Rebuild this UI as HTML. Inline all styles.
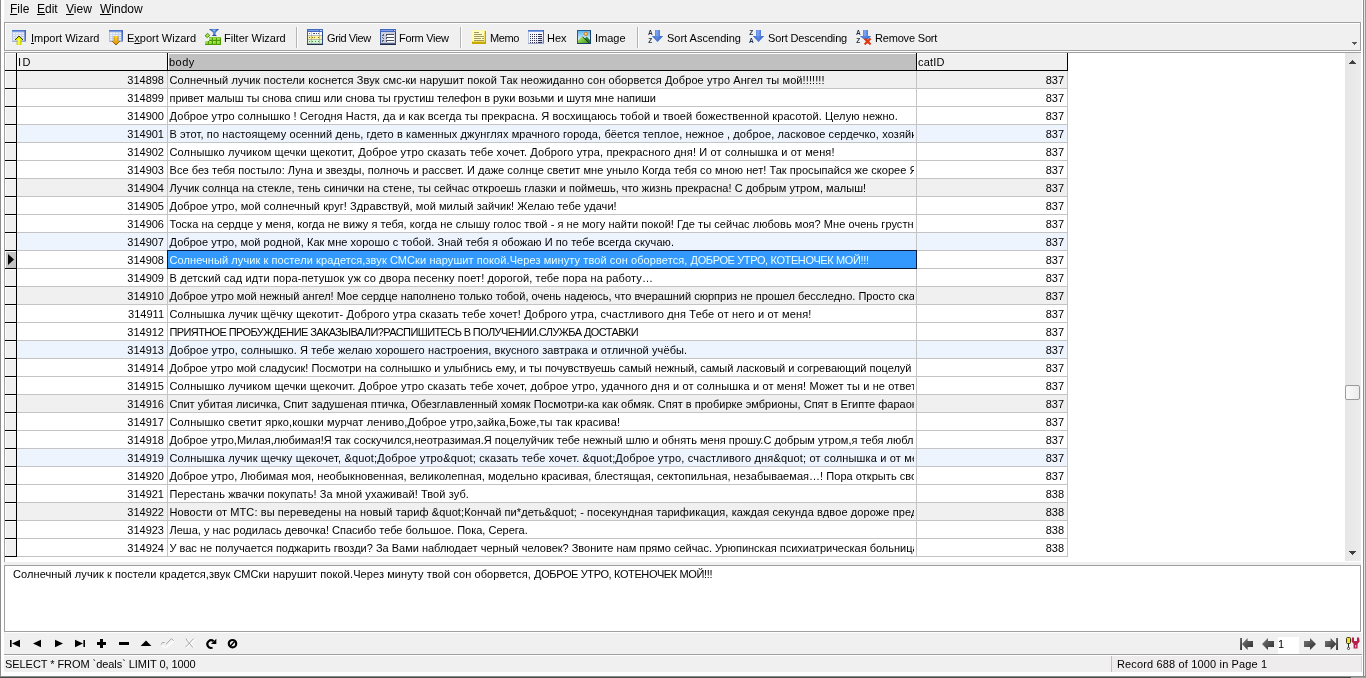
<!DOCTYPE html>
<html lang="ru"><head><meta charset="utf-8"><title>deals</title>
<style>
html,body{margin:0;padding:0}
body{width:1366px;height:678px;overflow:hidden;background:#f0f0f0;position:relative;font:11px "Liberation Sans","DejaVu Sans",sans-serif;color:#000}
*{box-sizing:border-box}
div,span,i{position:absolute;white-space:nowrap}
#menu,#tb,#grid,#memo,#nav,#st{will-change:transform}
i{display:block;font-style:normal}
u{text-decoration:underline}
b{font-weight:normal}
/* window frame */
#fl{left:0;top:0;width:1px;height:678px;background:#8c8c8c}
#fl2{left:1px;top:0;width:3px;height:676px;background:#fff}
#fr1{left:1362px;top:0;width:1px;height:676px;background:#fff}
#fr0{left:1361px;top:22px;width:1px;height:610px;background:#fff}
#fr2{left:1363px;top:0;width:1px;height:678px;background:#8c8c8c}
#fr3{left:1364px;top:0;width:1px;height:678px;background:#e4e4e4}
#fr4{left:1365px;top:0;width:1px;height:678px;background:#9a9a9a}
#fb1{left:1px;top:672px;width:1362px;height:4px;background:#fff}
#fb2{left:0;top:676px;width:1366px;height:1px;background:#8c8c8c}
#fb3{left:0;top:677px;width:1351px;height:1px;background:#484848}
#fb4{left:1351px;top:677px;width:15px;height:1px;background:#a0a0a0}
/* menu */
#menu{left:0;top:0;width:1366px;height:22px}
#menu span{top:2px;font-size:12px;line-height:14px}
/* toolbar */
#tb{left:4px;top:22px;width:1357px;height:29px;border:1px solid #a0a0a0;box-shadow:inset 1px 1px 0 #fff,1px 1px 0 #fff}
#tb .t{top:9px;line-height:13px}
#tb .sep{top:4px;width:1px;height:21px;background:#b4b4b4;box-shadow:1px 0 0 #fff}
#tb svg{position:absolute}
/* grid */
#grid{left:4px;top:52px;width:1357px;height:510px;background:#fff;border-left:1px solid #a0a0a0;border-top:1px solid #a0a0a0;overflow:hidden}
.hd{top:0;height:18px;background:#f0f0f0;border-bottom:1px solid #000;border-right:1px solid #000;box-shadow:inset 1px 1px 0 #fff;padding:3px 0 0 2px;line-height:13px}
#hind{left:0;width:12px}
#hid{left:12px;width:151px;padding-left:1px;letter-spacing:1.5px}
#hbody{left:163px;width:749px;background:#c0c0c0;padding-left:1px;letter-spacing:.5px}
#hcat{left:912px;width:151px;padding-left:1px;letter-spacing:.2px}
.r{left:0;width:1063px;height:18px;border-bottom:1px solid #c4c4c4;line-height:13px}
.r.g{background:#f0f0f0}
.r.b{background:#eef4fd}
.ind{left:0;top:0;width:12px;height:18px;background:#f0f0f0;border-right:1px solid #000;border-bottom:1px solid #000;box-shadow:inset 1px 1px 0 #fff}
.ind.cur{background:#c4c4c4}
.ind svg{position:absolute;left:3px;top:3px}
.c1{left:12px;top:0;width:151px;height:17px;border-right:1px solid #c4c4c4;text-align:right;padding:3px 3px 0 0}
.c2{left:163px;top:0;width:746px;height:17px;padding:3px 0 0 1.5px;overflow:hidden}
.c3{left:911px;top:0;width:152px;height:17px;border-left:1px solid #c4c4c4;border-right:1px solid #c4c4c4;text-align:right;padding:3px 3px 0 0}
.selc{background:#3399ff;color:#e8ffff;box-shadow:0 0 0 1px #0a1a3a;left:163px;top:0;width:748px;height:17px;padding:3px 0 0 1.5px;overflow:visible;z-index:2}
#sb{left:1340px;top:0;width:16px;height:508px;background:linear-gradient(90deg,#e6e6e6,#ececec)}
#sb .up{left:4px;top:7px;width:0;height:0;border-left:3.5px solid transparent;border-right:3.5px solid transparent;border-bottom:4px solid #404040}
#sb .dn{left:4px;top:498px;width:0;height:0;border-left:3.5px solid transparent;border-right:3.5px solid transparent;border-top:4px solid #404040}
#sb .thumb{left:0;top:332px;width:15px;height:15px;background:linear-gradient(90deg,#fafafa,#ececec);border:1px solid #9a9a9a;border-radius:2px}
/* memo */
#memo{left:4px;top:565px;width:1357px;height:67px;background:#fff;border:1px solid #a0a0a0;box-shadow:1px 1px 0 #fff}
#memo span{left:8px;top:2px;line-height:13px;letter-spacing:.085px}
/* nav */
#nav{left:4px;top:632px;width:1357px;height:22px}
#nav svg{position:absolute}
#pg{left:1274px;top:5px;width:21px;height:17px;background:#fff;padding:1px 0 0 0;line-height:13px}
/* status */
#stl{left:4px;top:654px;width:1358px;height:1px;background:#a0a0a0}
#stl2{left:4px;top:655px;width:1358px;height:1px;background:#fff}
#st{left:4px;top:656px;width:1358px;height:16px;background:#f0f0f0}
#st .rp{left:1108px;top:0;width:250px;height:16px;background:#eeecec;border-right:1px solid #d6d6d6}
#st span{top:2px;line-height:13px}
#st .dv{left:1107px;top:0;width:1px;height:16px;background:#c0c0c0}

</style></head>
<body>
<div id="menu"><span style="left:10px"><u>F</u>ile</span><span style="left:37px"><u>E</u>dit</span><span style="left:66px"><u>V</u>iew</span><span style="left:100px"><u>W</u>indow</span></div>
<svg width="0" height="0" style="left:0;top:0"><defs>
<linearGradient id="gH" x1="0" y1="0" x2="0" y2="1"><stop offset="0" stop-color="#3c63c2"/><stop offset="1" stop-color="#8fb0ec"/></linearGradient>
<linearGradient id="gR" x1="0" y1="0" x2="0" y2="1"><stop offset="0" stop-color="#3a5fbe"/><stop offset="1" stop-color="#5f7fcc"/></linearGradient>
<linearGradient id="gB" x1="0" y1="0" x2="1" y2="1"><stop offset="0" stop-color="#dde4f5"/><stop offset="1" stop-color="#aebce2"/></linearGradient>
<linearGradient id="gA" x1="0" y1="0" x2="1" y2="0"><stop offset="0" stop-color="#2456c4"/><stop offset=".45" stop-color="#7ea6f4"/><stop offset="1" stop-color="#1f4eb8"/></linearGradient>
<linearGradient id="gA2" x1="0" y1="0" x2="0" y2="1"><stop offset="0" stop-color="#4a7ee0"/><stop offset="1" stop-color="#1f4fb4"/></linearGradient>
<linearGradient id="gO" x1="0" y1="0" x2="0" y2="1"><stop offset="0" stop-color="#ffe020"/><stop offset="1" stop-color="#e08800"/></linearGradient>
<linearGradient id="gN" x1="0" y1="0" x2="1" y2="1"><stop offset="0" stop-color="#7a7a7a"/><stop offset="1" stop-color="#2a2a2a"/></linearGradient>
<linearGradient id="gSky" x1="0" y1="0" x2="0" y2="1"><stop offset="0" stop-color="#58b4f0"/><stop offset=".7" stop-color="#d8f0fc"/><stop offset="1" stop-color="#eef8fe"/></linearGradient>
<linearGradient id="gGr" x1="0" y1="0" x2="1" y2="1"><stop offset="0" stop-color="#b8ee64"/><stop offset="1" stop-color="#78c428"/></linearGradient>
<linearGradient id="gHx" x1="0" y1="0" x2="1" y2="1"><stop offset="0" stop-color="#ffffff"/><stop offset=".6" stop-color="#f4f4fc"/><stop offset="1" stop-color="#b8bce8"/></linearGradient>
<linearGradient id="gFu" x1="0" y1="0" x2="1" y2="0"><stop offset="0" stop-color="#15409a"/><stop offset=".5" stop-color="#5c90e4"/><stop offset="1" stop-color="#15409a"/></linearGradient>
<linearGradient id="gMt" x1="0" y1="0" x2="1" y2="1"><stop offset="0" stop-color="#c0f070"/><stop offset="1" stop-color="#3c9a18"/></linearGradient>
</defs></svg>
<div id="tb">
<svg width="14" height="15" style="left:7px;top:7px" viewBox="0 0 14 15"><rect x="0" y="0" width="14" height="12" fill="url(#gB)"/><rect x="0" y="0" width="14" height="2" fill="url(#gH)"/><rect x="12.5" y="0" width="1.5" height="12" fill="url(#gR)"/><rect x="0" y="11" width="14" height="1" fill="#a3abc6"/><rect x="0" y="2" width="1" height="10" fill="#b4c2e4"/>
<g fill="#eef1fa"><rect x="1" y="3" width="2" height="1"/><rect x="4" y="3" width="2" height="1"/><rect x="7" y="3" width="2" height="1"/><rect x="10" y="3" width="2" height="1"/><rect x="1" y="5" width="2" height="1"/><rect x="4" y="5" width="2" height="1"/><rect x="7" y="5" width="2" height="1"/><rect x="10" y="5" width="2" height="1"/><rect x="1" y="7" width="2" height="1"/><rect x="4" y="7" width="2" height="1"/><rect x="7" y="7" width="2" height="1"/><rect x="10" y="7" width="2" height="1"/><rect x="1" y="9" width="2" height="1"/><rect x="4" y="9" width="2" height="1"/><rect x="7" y="9" width="2" height="1"/><rect x="10" y="9" width="2" height="1"/></g><path d="M7 6 L11 10 L9 10 L9 15 L5 15 L5 10 L3 10Z" fill="#e4ee00"/><path d="M6 9 L6 14.6 L7.6 14.6 L7.6 9Z" fill="#f6fb50"/><path d="M3 10 L7 6 L11 10" fill="none" stroke="#3a4200" stroke-width="1"/><path d="M5 10.4 L5 15 M9 10.4 L9 15" stroke="#a8b400" stroke-width=".6"/></svg>
<span class="t" style="left:26px"><u>I</u>mport Wizard</span>
<svg width="14" height="15" style="left:104px;top:7px" viewBox="0 0 14 15"><rect x="0" y="0" width="14" height="12" fill="url(#gB)"/><rect x="0" y="0" width="14" height="2" fill="url(#gH)"/><rect x="12.5" y="0" width="1.5" height="12" fill="url(#gR)"/><rect x="0" y="11" width="14" height="1" fill="#a3abc6"/><rect x="0" y="2" width="1" height="10" fill="#b4c2e4"/>
<g fill="#eef1fa"><rect x="1" y="3" width="2" height="1"/><rect x="4" y="3" width="2" height="1"/><rect x="7" y="3" width="2" height="1"/><rect x="10" y="3" width="2" height="1"/><rect x="1" y="5" width="2" height="1"/><rect x="4" y="5" width="2" height="1"/><rect x="7" y="5" width="2" height="1"/><rect x="10" y="5" width="2" height="1"/><rect x="1" y="7" width="2" height="1"/><rect x="4" y="7" width="2" height="1"/><rect x="7" y="7" width="2" height="1"/><rect x="10" y="7" width="2" height="1"/><rect x="1" y="9" width="2" height="1"/><rect x="4" y="9" width="2" height="1"/><rect x="7" y="9" width="2" height="1"/><rect x="10" y="9" width="2" height="1"/></g><path d="M5 6 L9 6 L9 11 L11 11 L7 15 L3 11 L5 11Z" fill="url(#gO)"/><path d="M3 11 L7 15 L11 11" fill="none" stroke="#7a4400" stroke-width=".8"/><path d="M5 6 L5 11 M9 6 L9 11" stroke="#b87400" stroke-width=".6"/></svg>
<span class="t" style="left:122px">E<u>x</u>port Wizard</span>
<svg width="16" height="16" style="left:200px;top:6px" viewBox="0 0 16 16">
<path d="M4 0 L14 0 L10.6 3.6 L10.6 6.4 L11 7 L7.6 7 L8 6.4 L8 3.6Z" fill="url(#gFu)"/><path d="M6.4 .8 L11.6 .8 L9.3 2.4Z" fill="#dce8ff" opacity=".45"/><rect x="7.4" y="6" width="4" height="1" fill="#1a48a6"/>
<path d="M.6 6 L2.6 4.4 L4.8 6.4 L2.4 8.6 L.6 7.4Z" fill="#a4e048" stroke="#3f8a00" stroke-width=".9"/>
<rect x="4" y="8" width="12" height="4" fill="#4c9c00"/><rect x="0" y="12" width="16" height="4" fill="#4c9c00"/>
<rect x="4" y="8" width="12" height="1" fill="#84c830"/>
<g fill="url(#gGr)"><rect x="4" y="9" width="3" height="2"/><rect x="8" y="9" width="3" height="2"/><rect x="12" y="9" width="3" height="2"/><rect x="0" y="12" width="3" height="3"/><rect x="4" y="12" width="3" height="3"/><rect x="8" y="12" width="3" height="3"/><rect x="12" y="12" width="3" height="3"/></g>
</svg>
<span class="t" style="left:219px">Filter Wizard</span>
<i class="sep" style="left:291px"></i>
<svg width="16" height="16" style="left:302px;top:6px" viewBox="0 0 16 16" shape-rendering="crispEdges">
<rect x="0" y="0" width="16" height="16" fill="#3c5a9c"/><rect x="15" y="3" width="1" height="13" fill="#2a4480"/><rect x="0" y="0" width="16" height="3" fill="#4068c0"/><rect x="1" y="1" width="11" height="1" fill="#7ea0e4"/><rect x="13" y="1" width="2" height="1" fill="#c8d8f8"/><rect x="0" y="15" width="16" height="1" fill="#1e3050"/>
<rect x="1" y="3" width="14" height="4" fill="#ffffff"/><rect x="1" y="7" width="14" height="4" fill="#fdf3a4"/><rect x="1" y="11" width="14" height="4" fill="#d4f6d0"/>
<g fill="#9aa4a8"><rect x="1" y="6" width="14" height="1" opacity=".7"/><rect x="1" y="10" width="14" height="1" opacity=".7"/><rect x="1" y="14" width="14" height="1" opacity=".8"/><rect x="4" y="3" width="1" height="12" opacity=".6"/><rect x="12" y="3" width="1" height="12" opacity=".6"/></g>
<g fill="#555a66"><rect x="2" y="4" width="1" height="1"/><rect x="6" y="4" width="2" height="1"/><rect x="9" y="4" width="1" height="1"/><rect x="11" y="4" width="1" height="1"/></g>
<g fill="#8a7a10"><rect x="2" y="8" width="1" height="1"/><rect x="5" y="8" width="1" height="1"/><rect x="7" y="8" width="1" height="1"/><rect x="11" y="8" width="1" height="1"/></g>
<g fill="#4c8a58"><rect x="2" y="12" width="1" height="1"/><rect x="5" y="12" width="1" height="1"/><rect x="8" y="12" width="1" height="1"/><rect x="11" y="12" width="1" height="1"/></g>
</svg>
<span class="t" style="left:322px;letter-spacing:-.4px">Grid View</span>
<svg width="16" height="16" style="left:375px;top:6px" viewBox="0 0 16 16" shape-rendering="crispEdges">
<rect x="0" y="0" width="16" height="16" fill="#42609e"/><rect x="15" y="3" width="1" height="13" fill="#2a4480"/><rect x="0" y="0" width="16" height="3" fill="#4068c0"/><rect x="1" y="1" width="12" height="1" fill="#7ea0e4"/><rect x="14" y="1" width="1" height="1" fill="#d8e4fc"/><rect x="0" y="15" width="16" height="1" fill="#1e2c48"/><rect x="0" y="14" width="16" height="1" fill="#5a648c"/>
<rect x="1" y="3" width="14" height="11" fill="#ccd0de"/>
<g fill="#4a4e58"><rect x="6" y="5" width="8" height="1"/><rect x="6" y="8" width="8" height="1"/><rect x="6" y="11" width="8" height="1"/><rect x="6" y="5" width="1" height="2"/><rect x="6" y="8" width="1" height="2"/><rect x="6" y="11" width="1" height="2"/></g>
<g fill="#ffffff"><rect x="7" y="6" width="7" height="2"/><rect x="7" y="9" width="7" height="2"/><rect x="7" y="12" width="7" height="1"/></g>
<g fill="#5a5e70"><rect x="3" y="5" width="1" height="1"/><rect x="2" y="6" width="2" height="1"/><rect x="2" y="8" width="1" height="1"/><rect x="3" y="9" width="1" height="1"/><rect x="2" y="11" width="2" height="1"/><rect x="2" y="12" width="1" height="1"/></g>
</svg>
<span class="t" style="left:394px;letter-spacing:-.3px">Form View</span>
<i class="sep" style="left:455px"></i>
<svg width="14" height="14" style="left:467px;top:7px" viewBox="0 0 14 14" shape-rendering="crispEdges">
<rect x="0" y="0" width="14" height="14" fill="#fffba6"/><rect x="1" y="1" width="11" height="10" fill="#fffdc8"/><rect x="13" y="1" width="1" height="13" fill="#c4a400"/><rect x="12" y="1" width="1" height="11" fill="#f2e060"/><rect x="0" y="12" width="14" height="2" fill="#c8a800"/><rect x="0" y="11" width="13" height="1" fill="#f0dc50"/>
<g fill="#a09a62"><rect x="2" y="2" width="5" height="1"/><rect x="2" y="4" width="8" height="1"/><rect x="2" y="6" width="10" height="1"/><rect x="2" y="8" width="7" height="1"/><rect x="10" y="8" width="2" height="1"/><rect x="2" y="10" width="10" height="1"/></g>
</svg>
<span class="t" style="left:485px;letter-spacing:-.4px">Memo</span>
<svg width="16" height="14" style="left:523px;top:7px" viewBox="0 0 16 14" shape-rendering="crispEdges">
<rect x="0" y="0" width="16" height="14" fill="url(#gHx)"/><rect x="0" y="0" width="16" height="2" fill="url(#gH)"/><rect x="14.5" y="0" width="1.5" height="14" fill="url(#gR)"/><rect x="0" y="2" width="1" height="12" fill="#b8c4e4"/><rect x="0" y="13" width="16" height="1" fill="#9ca6cc"/>
<g fill="#2e3048"><rect x="2" y="4" width="1" height="1"/><rect x="4" y="4" width="1" height="1"/><rect x="6" y="4" width="1" height="1"/><rect x="8" y="4" width="1" height="1"/><rect x="10" y="4" width="4" height="1"/>
<rect x="2" y="6" width="1" height="1"/><rect x="4" y="6" width="1" height="1"/><rect x="6" y="6" width="1" height="1"/><rect x="8" y="6" width="1" height="1"/><rect x="10" y="6" width="4" height="1"/>
<rect x="2" y="8" width="1" height="1"/><rect x="4" y="8" width="1" height="1"/><rect x="6" y="8" width="1" height="1"/><rect x="8" y="8" width="1" height="1"/><rect x="10" y="8" width="4" height="1"/>
<rect x="2" y="10" width="1" height="1"/><rect x="4" y="10" width="1" height="1"/><rect x="6" y="10" width="1" height="1"/><rect x="8" y="10" width="1" height="1"/><rect x="10" y="10" width="4" height="1"/>
<rect x="2" y="12" width="1" height="1"/><rect x="4" y="12" width="1" height="1"/><rect x="6" y="12" width="1" height="1"/><rect x="8" y="12" width="1" height="1"/><rect x="10" y="12" width="4" height="1"/></g>
</svg>
<span class="t" style="left:542px">Hex</span>
<svg width="14" height="14" style="left:572px;top:7px" viewBox="0 0 14 14">
<rect x="0" y="0" width="14" height="14" fill="#245a8c"/><rect x="13" y="0" width="1" height="14" fill="#17406c"/><rect x="0" y="13" width="14" height="1" fill="#17406c"/><rect x="1" y="1" width="12" height="12" fill="url(#gSky)"/>
<circle cx="8.9" cy="3.9" r="1.8" fill="#f4b050" stroke="#c8761c" stroke-width=".7"/><circle cx="8.7" cy="3.6" r=".7" fill="#ffe8b8"/>
<path d="M7.6 8.6 L9.8 6.8 L13 10 L13 13 L10 13Z" fill="#2a7a30"/>
<path d="M1 10.6 L5 6.4 L11.8 13 L1 13Z" fill="url(#gMt)"/>
<path d="M5.6 6.9 L12.2 13" stroke="#0c2c10" stroke-width=".9" fill="none"/>
</svg>
<span class="t" style="left:590px">Image</span>
<i class="sep" style="left:632px"></i>
<svg width="16" height="14" style="left:643px;top:7px" viewBox="0 0 16 14">
<text x="0" y="5" font-family="Liberation Sans,sans-serif" font-size="6.5" font-weight="bold" fill="#1c3048">A</text><text x=".2" y="13" font-family="Liberation Sans,sans-serif" font-size="6.5" font-weight="bold" fill="#1c3048">Z</text>
<path d="M7 0 L12 0 L12 6 L15 6 L9.5 12 L4 6 L7 6Z" fill="url(#gA)"/><path d="M4 6 L15 6 L9.5 12Z" fill="url(#gA2)" opacity=".55"/>
</svg>
<span class="t" style="left:662px">Sort Ascending</span>
<svg width="16" height="14" style="left:744px;top:7px" viewBox="0 0 16 14">
<text x=".2" y="5" font-family="Liberation Sans,sans-serif" font-size="6.5" font-weight="bold" fill="#1c3048">Z</text><text x="0" y="13" font-family="Liberation Sans,sans-serif" font-size="6.5" font-weight="bold" fill="#1c3048">A</text>
<path d="M7 0 L12 0 L12 6 L15 6 L9.5 12 L4 6 L7 6Z" fill="url(#gA)"/><path d="M4 6 L15 6 L9.5 12Z" fill="url(#gA2)" opacity=".55"/>
</svg>
<span class="t" style="left:763px;letter-spacing:-.15px">Sort Descending</span>
<svg width="16" height="15" style="left:851px;top:7px" viewBox="0 0 16 15">
<text x="0" y="5" font-family="Liberation Sans,sans-serif" font-size="6.5" font-weight="bold" fill="#1c3048">A</text><text x=".2" y="13" font-family="Liberation Sans,sans-serif" font-size="6.5" font-weight="bold" fill="#1c3048">Z</text>
<path d="M7 0 L12 0 L12 6 L15 6 L10 11 L4 6 L7 6Z" fill="url(#gA)"/><path d="M4 6 L15 6 L10 11Z" fill="url(#gA2)" opacity=".55"/>
<path d="M8.6 8.6 L14.6 14.4 M14.6 8.6 L8.6 14.4" stroke="#e0340c" stroke-width="2.1"/><circle cx="11.6" cy="11.5" r="1.8" fill="#e23810"/>
</svg>
<span class="t" style="left:870px;letter-spacing:-.18px">Remove Sort</span>
<svg width="5" height="3" style="left:1347px;top:19px" viewBox="0 0 5 3" shape-rendering="crispEdges"><rect x="0" y="0" width="5" height="1" fill="#585858"/><rect x="1" y="1" width="3" height="1" fill="#585858"/><rect x="2" y="2" width="1" height="1" fill="#585858"/></svg>
</div>
<div id="grid">
<div class="hd" id="hind"></div><div class="hd" id="hid">ID</div><div class="hd sel" id="hbody">body</div><div class="hd" id="hcat">catID</div>
<div class="r g" style="top:18px"><i class="ind"></i><span class="c1">314898</span><span class="c2" style="letter-spacing:0.091px">Солнечный лучик постели коснется Звук смс-ки нарушит покой Так неожиданно сон оборвется Доброе утро Ангел ты мой!!!!!!!</span><span class="c3">837</span></div>
<div class="r" style="top:36px"><i class="ind"></i><span class="c1">314899</span><span class="c2" style="letter-spacing:-0.051px">привет малыш ты снова спиш или снова ты грустиш телефон в руки возьми и шутя мне напиши</span><span class="c3">837</span></div>
<div class="r" style="top:54px"><i class="ind"></i><span class="c1">314900</span><span class="c2" style="letter-spacing:0.093px">Доброе утро солнышко ! Сегодня Настя, да и как всегда ты прекрасна. Я восхищаюсь тобой и твоей божественной красотой. Целую нежно.</span><span class="c3">837</span></div>
<div class="r b" style="top:72px"><i class="ind"></i><span class="c1">314901</span><span class="c2" style="letter-spacing:0.106px">В этот, по настоящему осенний день, гдето в каменных джунглях мрачного города, бёется теплое, нежное , доброе, ласковое сердечко, хозяйки которого</span><span class="c3">837</span></div>
<div class="r" style="top:90px"><i class="ind"></i><span class="c1">314902</span><span class="c2" style="letter-spacing:0.146px">Солнышко лучиком щечки щекотит, Доброе утро сказать тебе хочет. Доброго утра, прекрасного дня! И от солнышка и от меня!</span><span class="c3">837</span></div>
<div class="r" style="top:108px"><i class="ind"></i><span class="c1">314903</span><span class="c2" style="letter-spacing:0.042px">Все без тебя постыло: Луна и звезды, полночь и рассвет. И даже солнце светит мне уныло Когда тебя со мною нет! Так просыпайся же скорее Я тебя жду</span><span class="c3">837</span></div>
<div class="r g" style="top:126px"><i class="ind"></i><span class="c1">314904</span><span class="c2" style="letter-spacing:0.029px">Лучик солнца на стекле, тень синички на стене, ты сейчас откроешь глазки и поймешь, что жизнь прекрасна! С добрым утром, малыш!</span><span class="c3">837</span></div>
<div class="r" style="top:144px"><i class="ind"></i><span class="c1">314905</span><span class="c2" style="letter-spacing:0.07px">Доброе утро, мой солнечный круг! Здравствуй, мой милый зайчик! Желаю тебе удачи!</span><span class="c3">837</span></div>
<div class="r" style="top:162px"><i class="ind"></i><span class="c1">314906</span><span class="c2" style="letter-spacing:0.049px">Тоска на сердце у меня, когда не вижу я тебя, когда не слышу голос твой - я не могу найти покой! Где ты сейчас любовь моя? Мне очень грустно без тебя</span><span class="c3">837</span></div>
<div class="r b" style="top:180px"><i class="ind"></i><span class="c1">314907</span><span class="c2" style="letter-spacing:0.056px">Доброе утро, мой родной, Как мне хорошо с тобой. Знай тебя я обожаю И по тебе всегда скучаю.</span><span class="c3">837</span></div>
<div class="r" style="top:198px"><i class="ind cur"><svg width="6" height="11" viewBox="0 0 6 11"><path d="M0 0 L6 5.5 L0 11Z" fill="#000"/></svg></i><span class="c1">314908</span><span class="c2 selc" style="letter-spacing:0.085px">Солнечный лучик к постели крадется,звук СМСки нарушит покой.Через минуту твой сон оборвется, <b style="letter-spacing:-.372px">ДОБРОЕ УТРО, КОТЕНОЧЕК МОЙ!!!</b></span><span class="c3">837</span></div>
<div class="r" style="top:216px"><i class="ind"></i><span class="c1">314909</span><span class="c2" style="letter-spacing:0.125px">В детский сад идти пора-петушок уж со двора песенку поет! дорогой, тебе пора на работу…</span><span class="c3">837</span></div>
<div class="r g" style="top:234px"><i class="ind"></i><span class="c1">314910</span><span class="c2" style="letter-spacing:0.009px">Доброе утро мой нежный ангел! Мое сердце наполнено только тобой, очень надеюсь, что вчерашний сюрприз не прошел бесследно. Просто скажи мне</span><span class="c3">837</span></div>
<div class="r" style="top:252px"><i class="ind"></i><span class="c1">314911</span><span class="c2" style="letter-spacing:0.16px">Солнышка лучик щёчку щекотит- Доброго утра сказать тебе хочет! Доброго утра, счастливого дня Тебе от него и от меня!</span><span class="c3">837</span></div>
<div class="r" style="top:270px"><i class="ind"></i><span class="c1">314912</span><span class="c2" style="letter-spacing:-0.607px">ПРИЯТНОЕ ПРОБУЖДЕНИЕ ЗАКАЗЫВАЛИ?РАСПИШИТЕСЬ В ПОЛУЧЕНИИ.СЛУЖБА ДОСТАВКИ</span><span class="c3">837</span></div>
<div class="r b" style="top:288px"><i class="ind"></i><span class="c1">314913</span><span class="c2" style="letter-spacing:0.099px">Доброе утро, солнышко. Я тебе желаю хорошего настроения, вкусного завтрака и отличной учёбы.</span><span class="c3">837</span></div>
<div class="r" style="top:306px"><i class="ind"></i><span class="c1">314914</span><span class="c2" style="letter-spacing:-0.024px">Доброе утро мой сладусик! Посмотри на солнышко и улыбнись ему, и ты почувствуешь самый нежный, самый ласковый и согревающий поцелуй от меня</span><span class="c3">837</span></div>
<div class="r" style="top:324px"><i class="ind"></i><span class="c1">314915</span><span class="c2" style="letter-spacing:0.137px">Солнышко лучиком щечки щекочит. Доброе утро сказать тебе хочет, доброе утро, удачного дня и от солнышка и от меня! Может ты и не ответишь</span><span class="c3">837</span></div>
<div class="r g" style="top:342px"><i class="ind"></i><span class="c1">314916</span><span class="c2" style="letter-spacing:0.014px">Спит убитая лисичка, Спит задушеная птичка, Обезглавленный хомяк Посмотри-ка как обмяк. Спят в пробирке эмбрионы, Спят в Египте фараоны</span><span class="c3">837</span></div>
<div class="r" style="top:360px"><i class="ind"></i><span class="c1">314917</span><span class="c2" style="letter-spacing:0.15px">Солнышко светит ярко,кошки мурчат лениво,Доброе утро,зайка,Боже,ты так красива!</span><span class="c3">837</span></div>
<div class="r" style="top:378px"><i class="ind"></i><span class="c1">314918</span><span class="c2" style="letter-spacing:0.015px">Доброе утро,Милая,любимая!Я так соскучился,неотразимая.Я поцелуйчик тебе нежный шлю и обнять меня прошу.С добрым утром,я тебя люблю</span><span class="c3">837</span></div>
<div class="r b" style="top:396px"><i class="ind"></i><span class="c1">314919</span><span class="c2" style="letter-spacing:0.161px">Солнышка лучик щечку щекочет, &amp;quot;Доброе утро&amp;quot; сказать тебе хочет. &amp;quot;Доброе утро, счастливого дня&amp;quot; от солнышка и от меня</span><span class="c3">837</span></div>
<div class="r" style="top:414px"><i class="ind"></i><span class="c1">314920</span><span class="c2" style="letter-spacing:0.044px">Доброе утро, Любимая моя, необыкновенная, великолепная, модельно красивая, блестящая, сектопильная, незабываемая…! Пора открыть свои глазки</span><span class="c3">837</span></div>
<div class="r" style="top:432px"><i class="ind"></i><span class="c1">314921</span><span class="c2" style="letter-spacing:0.1px">Перестань жвачки покупать! За мной ухаживай! Твой зуб.</span><span class="c3">838</span></div>
<div class="r g" style="top:450px"><i class="ind"></i><span class="c1">314922</span><span class="c2" style="letter-spacing:0.103px">Новости от МТС: вы переведены на новый тариф &amp;quot;Кончай пи*деть&amp;quot; - посекундная тарификация, каждая секунда вдвое дороже предыдущей</span><span class="c3">838</span></div>
<div class="r" style="top:468px"><i class="ind"></i><span class="c1">314923</span><span class="c2" style="letter-spacing:0.01px">Леша, у нас родилась девочка! Спасибо тебе большое. Пока, Серега.</span><span class="c3">838</span></div>
<div class="r" style="top:486px"><i class="ind"></i><span class="c1">314924</span><span class="c2" style="letter-spacing:-0.004px">У вас не получается поджарить гвозди? За Вами наблюдает черный человек? Звоните нам прямо сейчас. Урюпинская психиатрическая больница</span><span class="c3">838</span></div>
<div id="sb"><svg width="7" height="4" style="position:absolute;left:4px;top:7px" viewBox="0 0 7 4" shape-rendering="crispEdges"><rect x="3" y="0" width="1" height="1" fill="#404040"/><rect x="2" y="1" width="3" height="1" fill="#404040"/><rect x="1" y="2" width="5" height="1" fill="#404040"/><rect x="0" y="3" width="7" height="1" fill="#404040"/></svg><i class="thumb"></i><svg width="7" height="4" style="position:absolute;left:4px;top:498px" viewBox="0 0 7 4" shape-rendering="crispEdges"><rect x="0" y="0" width="7" height="1" fill="#404040"/><rect x="1" y="1" width="5" height="1" fill="#404040"/><rect x="2" y="2" width="3" height="1" fill="#404040"/><rect x="3" y="3" width="1" height="1" fill="#404040"/></svg></div>
</div>
<div id="memo"><span>Солнечный лучик к постели крадется,звук СМСки нарушит покой.Через минуту твой сон оборвется, <b style="letter-spacing:-.372px">ДОБРОЕ УТРО, КОТЕНОЧЕК МОЙ!!!</b></span></div>
<div id="nav">
<svg width="240" height="22" style="left:0;top:0" viewBox="4 632 240 22">
<g fill="#000">
<rect x="10" y="640" width="1.6" height="7"/><path d="M12 643.5 L20 639.8 L20 647.2Z"/>
<path d="M33 643.5 L41 639.8 L41 647.2Z"/>
<path d="M63 643.5 L55 639.8 L55 647.2Z"/>
<path d="M83 643.5 L75 639.8 L75 647.2Z"/><rect x="83.4" y="640" width="1.6" height="7"/>
<rect x="97" y="642" width="9" height="3"/><rect x="100" y="639" width="3" height="9"/>
<rect x="119" y="642" width="10" height="3"/>
<path d="M140.6 646 L146 640.6 L151.4 646Z"/>
</g>
<g fill="none" stroke="#fff" stroke-width="1.1"><path d="M162 645.5 L165.5 648 L174 641"/><path d="M188 639.5 L194.5 648 M194.5 639.5 L186.5 648"/></g>
<g fill="none" stroke="#a8a8a8" stroke-width="1"><path d="M161.3 644.6 L162.4 642.5 L164.6 642.5 M166 644.2 L171.4 638.6 L173.6 640.6"/><path d="M186 638.6 L187 640.4 L193 647.6 M193.6 638.6 L185.6 647.2"/></g>
<path d="M212.6 647.6 A3.8 3.8 0 1 1 213.6 641.2" fill="none" stroke="#000" stroke-width="2.1"/><path d="M216.3 638.7 L216.3 644 L211 644Z" fill="#000"/>
<circle cx="232.5" cy="643.7" r="3.7" fill="none" stroke="#000" stroke-width="2.2"/><path d="M230.2 646.2 L234.8 641.2" stroke="#000" stroke-width="1.5"/>
</svg>
<svg width="126" height="22" style="left:1232px;top:0" viewBox="1236 632 126 22">
<g fill="url(#gN)">
<rect x="1240" y="638" width="2" height="12"/><path d="M1242 644 L1247.6 638 L1247.6 641 L1253 641 L1253 647 L1247.6 647 L1247.6 650Z"/>
<path d="M1262 644 L1268 638 L1268 641 L1274 641 L1274 647 L1268 647 L1268 650Z"/>
<path d="M1316 644 L1310 638 L1310 641 L1304 641 L1304 647 L1310 647 L1310 650Z"/>
<path d="M1336.4 644 L1330.6 638 L1330.6 641 L1325 641 L1325 647 L1330.6 647 L1330.6 650Z"/><rect x="1336" y="638" width="2" height="12"/>
</g>
<rect x="1346.5" y="637.5" width="4" height="6" rx="1" fill="#f0e030" stroke="#3a3410" stroke-width="1"/><rect x="1348" y="644" width="1" height="4" fill="#222"/><circle cx="1348.5" cy="648.4" r="1.1" fill="#fff" stroke="#222" stroke-width=".8"/>
<path d="M1352 637.6 L1354 637.6 L1354 641 L1357 641 L1357 637.6 L1359 637.6 L1359.6 641.4 L1357.6 644 L1357.6 648.6 L1353.6 648.6 L1353.6 644 L1351.6 641.4Z" fill="#ba1e4c"/><rect x="1355" y="645" width="1.2" height="2.4" fill="#f0a0b8"/>
</svg>
<div id="pg">1</div>
</div>
<div id="stl"></div><div id="stl2"></div>
<div id="st"><span style="left:1px;letter-spacing:-.06px">SELECT * FROM `deals` LIMIT 0, 1000</span><i class="dv"></i><i class="rp"></i><span style="left:1113px;letter-spacing:.15px">Record 688 of 1000 in Page 1</span></div>
<div id="fl"></div><div id="fl2"></div><div id="fr0"></div><div id="fr1"></div><div id="fr2"></div><div id="fr3"></div><div id="fr4"></div><div id="fb1"></div><div id="fb2"></div><div id="fb3"></div><div id="fb4"></div>
</body></html>
